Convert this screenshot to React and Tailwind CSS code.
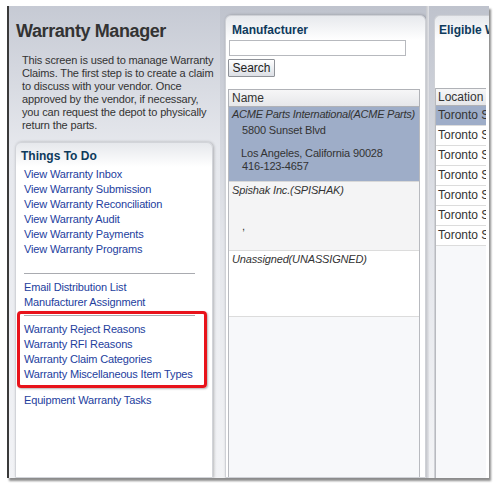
import { useState } from 'react';

const todo = [
  'View Warranty Inbox',
  'View Warranty Submission',
  'View Warranty Reconciliation',
  'View Warranty Audit',
  'View Warranty Payments',
  'View Warranty Programs',
];

const setup = ['Warranty Reject Reasons', 'Warranty RFI Reasons', 'Warranty Claim Categories', 'Warranty Miscellaneous Item Types'];

const intro = [
  'This screen is used to manage Warranty',
  'Claims. The first step is to create a claim',
  'to discuss with your vendor. Once',
  'approved by the vendor, if necessary,',
  'you can request the depot to physically',
  'return the parts.',
];

function Link({ children }) {
  return <a className="block h-[15px] leading-[15px] text-[#23409e] hover:underline cursor-pointer whitespace-nowrap">{children}</a>;
}

export default function App() {
  const [query, setQuery] = useState('');

  return (
    <div className="w-[493px] h-[484px] bg-white pl-[7px] pt-[6px] font-['Liberation_Sans',sans-serif] text-[11px] tracking-[-0.15px] text-[#333]">
      <div className="w-[482px] h-[472px] flex border-l-2 border-[#3a3a3a] bg-gradient-to-b from-[#bfc3cd] via-[#e4e6eb] to-[#f3f4f6] shadow-[2px_3px_2px_rgba(0,0,0,0.45)] overflow-hidden">
        {/* left: instructions + things to do */}
        <div className="w-[211px] shrink-0 flex flex-col pt-[14px] bg-gradient-to-b from-[#c6cad4] via-[#e6e8ed] via-30% to-[#f2f3f6]">
          <h1 className="pl-[7px] text-[18px] font-bold leading-[22px] tracking-[-0.4px] text-[#333]">Warranty Manager</h1>
          <p className="pl-[13px] mt-[12px] leading-[13px] whitespace-nowrap">
            {intro.map((l) => (
              <span key={l} className="block">{l}</span>
            ))}
          </p>
          <div className="ml-[6px] mr-[7px] mt-[10px] flex-1 rounded-t-[6px] bg-gradient-to-b from-[#e6e8ec] to-white to-[24px] border border-[#d2d4d9] shadow-[1px_0_3px_rgba(0,0,0,0.25)] pt-[6px]">
            <h2 className="pl-[5px] text-[12px] font-bold leading-[14px] tracking-normal text-[#0e3a5c]">Things To Do</h2>
            <div className="pl-[8px] mt-[4px]">
              {todo.map((t) => (
                <Link key={t}>{t}</Link>
              ))}
            </div>
            <div className="ml-[8px] w-[171px] h-px bg-[#a9abb0] mt-[16px] mb-[6px]" />
            <div className="pl-[8px]">
              <Link>Email Distribution List</Link>
              <Link>Manufacturer Assignment</Link>
            </div>
            <div className="ml-[1px] mr-[5px] mt-[1px] border-[3px] border-[#e8131b] rounded-[4px] pt-[1px] pb-[3px] shadow-[1px_1px_2px_rgba(0,0,0,0.3)]">
              <div className="ml-[4px] w-[171px] h-px bg-[#a9abb0] mb-[6px]" />
              <div className="pl-[4px]">
                {setup.map((t) => (
                  <Link key={t}>{t}</Link>
                ))}
              </div>
            </div>
            <div className="pl-[8px] mt-[5px]">
              <Link>Equipment Warranty Tasks</Link>
            </div>
          </div>
        </div>

        {/* middle: manufacturer list */}
        <div className="w-[5px] shrink-0" />
        <div className="w-[201px] shrink-0 mt-[9px] rounded-t-[6px] border border-[#cfd1d6] bg-gradient-to-b from-[#e7e9ed] to-white to-[24px] shadow-[1px_0_3px_rgba(0,0,0,0.25)] flex flex-col">
          <h2 className="pl-[6px] pt-[7px] text-[12px] font-bold leading-[14px] tracking-normal text-[#0e3a5c]">Manufacturer</h2>
          <input
            value={query}
            onChange={(e) => setQuery(e.target.value)}
            className="ml-[3px] mt-[3px] w-[177px] h-[16px] border border-[#b7b9be] bg-white outline-none px-1"
          />
          <button className="ml-[2px] mt-[3px] w-[47px] h-[18px] border border-[#8f9298] rounded-[1px] bg-gradient-to-b from-white to-[#dcdfe5] text-[12px] leading-[16px] tracking-normal text-[#222]">
            Search
          </button>
          <div className="ml-[2px] mt-[12px] w-[192px] flex-1 flex flex-col border-x border-[#b8babf] bg-[#f7f8fa]">
            <div className="h-[18px] border border-[#b0b2b7] -mx-px bg-gradient-to-b from-[#f6f6f7] to-[#e6e7ea] pl-[3px] leading-[16px] text-[12px] tracking-normal">Name</div>
            <div className="h-[75px] bg-[#9eadc8] border-b border-[#d8d8d8] pt-[1px] leading-[13px] whitespace-nowrap">
              <div className="pl-[3px] italic tracking-[-0.25px]">ACME Parts International(ACME Parts)</div>
              <div className="pl-[13px] mt-[3px]">5800 Sunset Blvd</div>
              <div className="pl-[12px] mt-[10px]">Los Angeles, California 90028</div>
              <div className="pl-[13px]">416-123-4657</div>
            </div>
            <div className="h-[69px] bg-[#f4f4f5] border-b border-[#dcdcdc] pt-[2px] leading-[13px]">
              <div className="pl-[3px] italic">Spishak Inc.(SPISHAK)</div>
              <div className="pl-[13px] mt-[23px]">,</div>
            </div>
            <div className="h-[66px] bg-white border-b border-[#dcdcdc] pt-[2px] leading-[13px]">
              <div className="pl-[3px] italic">Unassigned(UNASSIGNED)</div>
            </div>
          </div>
        </div>

        {/* splitter */}
        <div className="w-[8px] shrink-0 flex">
          <div className="w-[3px] bg-gradient-to-r from-[#c3c5ca] to-[#e3e4e8]" />
          <div className="w-[5px]" />
        </div>

        {/* right: eligible warehouses (clipped by the window) */}
        <div className="flex-1 min-w-0 mt-[9px] rounded-tl-[6px] border-l border-t border-[#cfd1d6] bg-gradient-to-b from-[#e7e9ed] to-white to-[24px] flex flex-col overflow-hidden">
          <h2 className="pl-[4px] pt-[7px] text-[12px] font-bold leading-[14px] tracking-normal text-[#0e3a5c] whitespace-nowrap">Eligible Warehouses</h2>
          <div className="mt-[51px] flex-1 flex flex-col border-l border-[#b8babf] bg-[#f7f8fa] mr-[3px] overflow-hidden">
            <div className="h-[18px] border-y border-[#b0b2b7] bg-gradient-to-b from-[#f6f6f7] to-[#e6e7ea] pl-[2px] leading-[16px] text-[12px] tracking-normal">Location</div>
            {[0, 1, 2, 3, 4, 5, 6].map((i) => (
              <div key={i} className={`h-[20px] border-b border-[#dcdcdc] pl-[2px] leading-[19px] text-[12px] tracking-normal whitespace-nowrap ${i === 0 ? 'bg-[#9eadc8]' : 'bg-white'}`}>
                Toronto Shipping
              </div>
            ))}
          </div>
        </div>
      </div>
    </div>
  );
}
